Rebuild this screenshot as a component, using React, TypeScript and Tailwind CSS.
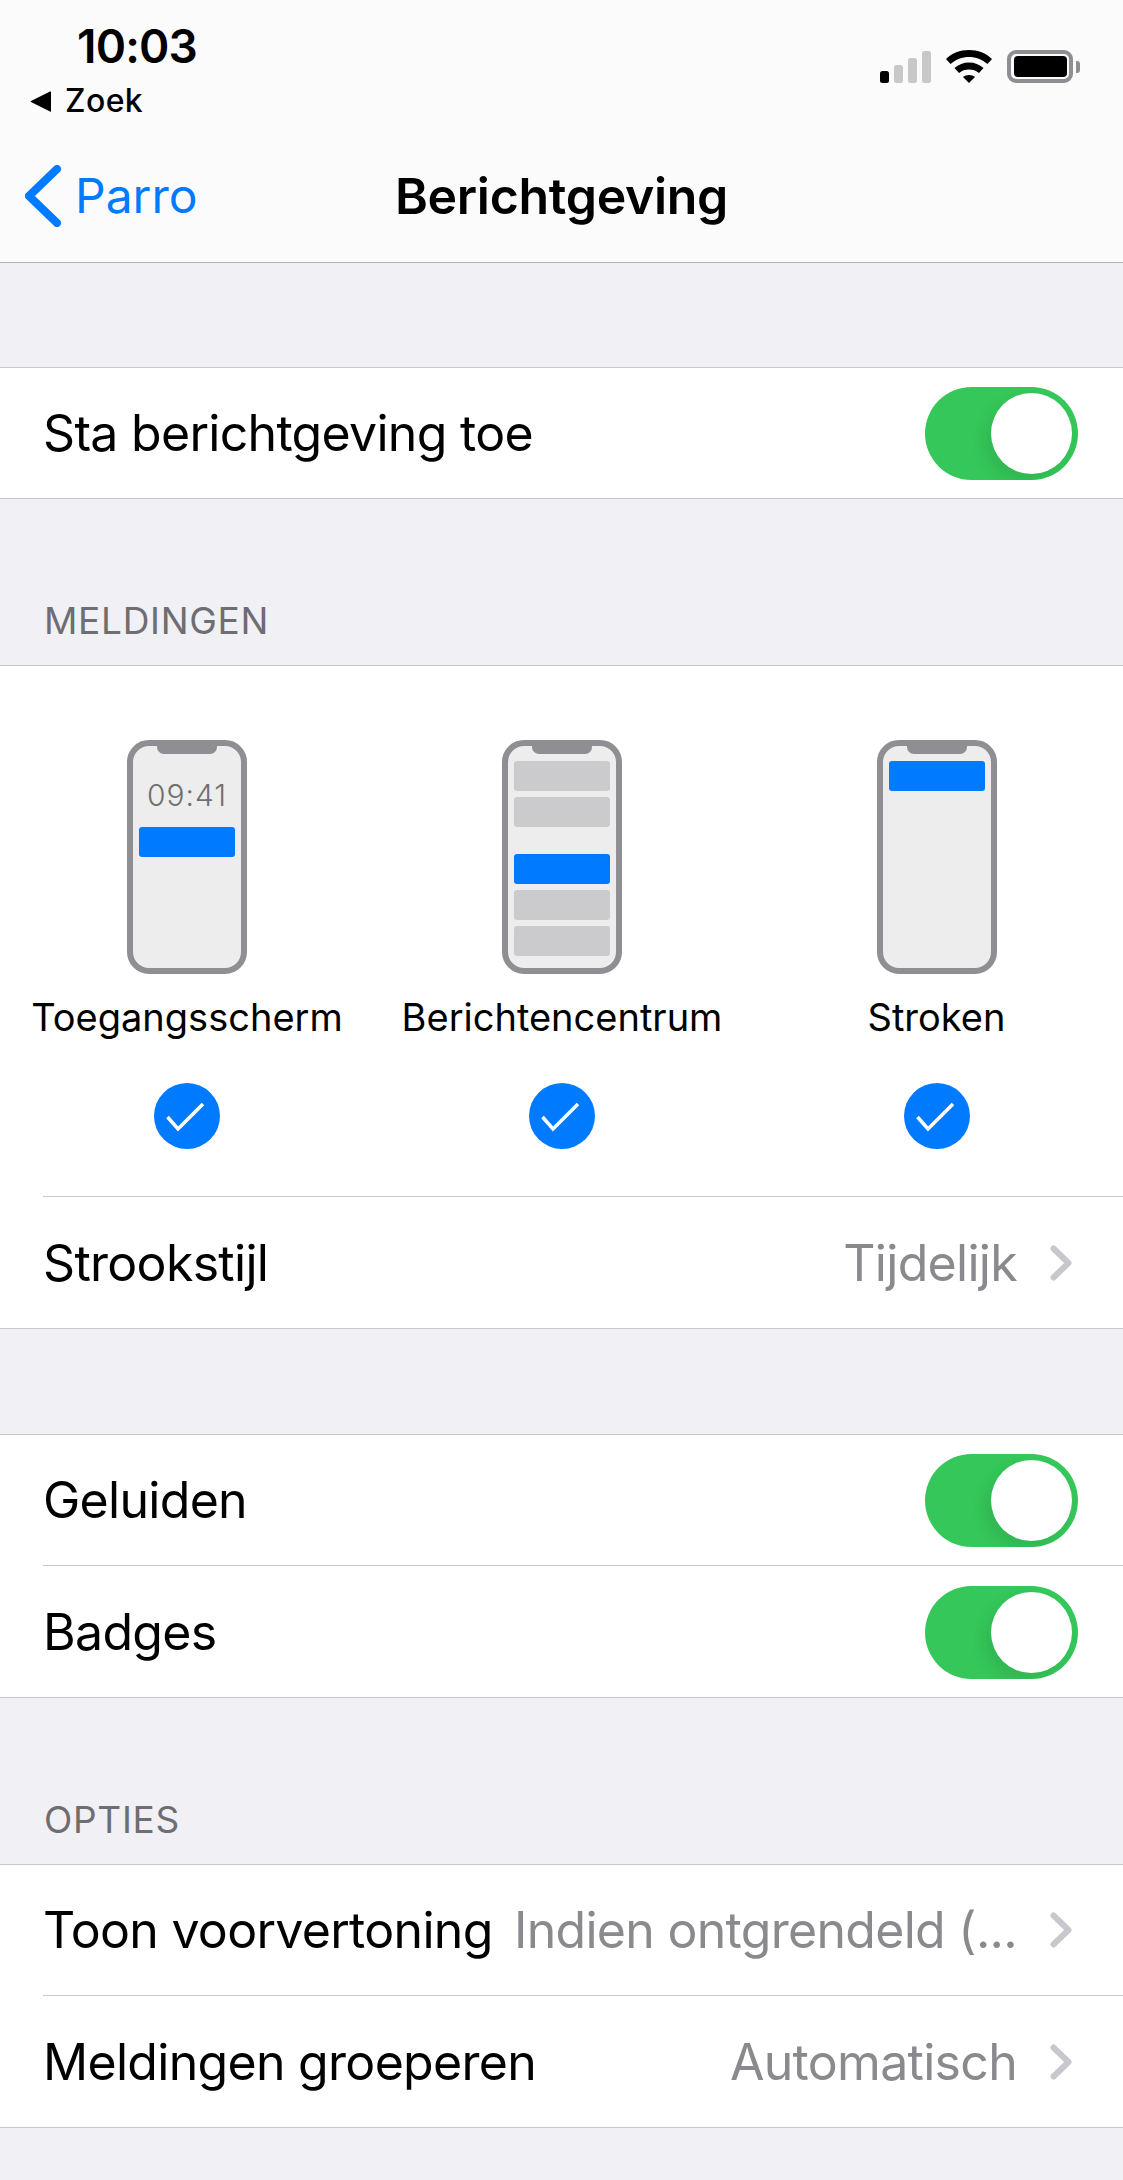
import React from 'react';

function Chevron() {
  return (
    <svg width="22" height="36" viewBox="0 0 22 36" className="shrink-0" fill="none">
      <path d="M3.5 3.5 L18.5 18 L3.5 32.5" stroke="#c7c7cc" strokeWidth="6" strokeLinecap="round" strokeLinejoin="round" />
    </svg>
  );
}

function Toggle() {
  return (
    <div className="flex h-[93px] w-[153px] shrink-0 items-center justify-end overflow-hidden rounded-full bg-[#35c759] pr-[6px]">
      <div className="h-[81px] w-[81px] rounded-full bg-white shadow-[-6px_8px_16px_rgba(0,0,0,0.09)]" />
    </div>
  );
}

function Row({ label, children }: { label: string; children?: React.ReactNode }) {
  return (
    <div className="flex h-[130px] items-center justify-between pl-[43px] pr-[45px]">
      <span className="shrink-0 text-[50px] leading-none tracking-[-0.7px] text-black">{label}</span>
      {children}
    </div>
  );
}

function ValueRow({ label, value }: { label: string; value: string }) {
  return (
    <Row label={label}>
      <div className="flex items-center gap-[33px] pr-[6px]">
        <span className="text-[50px] leading-none tracking-[-0.7px] text-[#8a8a8e]">{value}</span>
        <Chevron />
      </div>
    </Row>
  );
}

function Divider() {
  return <div className="ml-[43px] h-px bg-[#c8c7cc]" />;
}

function Phone({ children }: { children?: React.ReactNode }) {
  return (
    <div className="relative h-[234px] w-[120px] rounded-[22px] border-[6px] border-[#8e8e93] bg-[#ededed] px-[6px]">
      <div className="absolute left-[24px] top-0 h-[8px] w-[60px] rounded-b-[7px] bg-[#8e8e93]" />
      {children}
    </div>
  );
}

function Card({ blue }: { blue?: boolean }) {
  return <div className={blue ? 'h-[30px] rounded-[3px] bg-[#007aff]' : 'h-[30px] rounded-[3px] bg-[#cbcbcd]'} />;
}

function Check() {
  return (
    <svg width="66" height="66" viewBox="0 0 66 66" fill="none">
      <circle cx="33" cy="33" r="33" fill="#007aff" />
      <path d="M13.5 34 L24 46 L49 21" stroke="#fff" strokeWidth="3.5" />
    </svg>
  );
}

function AlertStyle({ label, children }: { label: string; children: React.ReactNode }) {
  return (
    <div className="flex flex-col items-center">
      <Phone>{children}</Phone>
      <span className="mt-[24px] whitespace-nowrap text-[38px] leading-[38px] text-black">{label}</span>
      <div className="mt-[47px]">
        <Check />
      </div>
    </div>
  );
}

function StatusIcons() {
  return (
    <div className="flex items-end pb-[1px]">
      <div className="flex items-end gap-[5px]">
        <div className="h-[12px] w-[9px] rounded-[2.5px] bg-black" />
        <div className="h-[18px] w-[9px] rounded-[2.5px] bg-[#c8c8c8]" />
        <div className="h-[25px] w-[9px] rounded-[2.5px] bg-[#c8c8c8]" />
        <div className="h-[32px] w-[9px] rounded-[2.5px] bg-[#c8c8c8]" />
      </div>
      <svg width="46" height="33" viewBox="0 0 46 33" className="ml-[15px]">
        <path d="M0 9 C6 3 14 0 23 0 C32 0 40 3 46 9 L41.5 14 C36 9.5 30 7 23 7 C16 7 10 9.5 4.5 14 Z" />
        <path d="M8.5 18 C12.5 14.5 17.5 12.5 23 12.5 C28.5 12.5 33.5 14.5 37.5 18 L33 23 C30 20.5 27 19.5 23 19.5 C19 19.5 16 20.5 13 23 Z" />
        <path d="M17 27 C18.5 25.8 20.5 25 23 25 C25.5 25 27.5 25.8 29 27 L23 33 Z" />
      </svg>
      <div className="ml-[15px] flex h-[33px] w-[66px] items-center justify-center rounded-[9px] border-[4px] border-[#8e8e93]">
        <div className="h-[21px] w-[53px] rounded-[4px] bg-black" />
      </div>
      <div className="mb-[10px] ml-[3px] h-[12px] w-[4px] rounded-r-[3px] bg-[#8e8e93]" />
    </div>
  );
}

export default function App() {
  return (
    <div className="min-h-[2180px] w-[1123px] bg-[#f0f0f5] font-['Inter','Liberation_Sans',sans-serif]">
      <header className="flex h-[263px] flex-col border-b border-[#b2b2b2] bg-[#fbfbfc]">
        <div className="flex h-[120px] justify-between pr-[43px]">
          <div>
            <div className="ml-[77px] mt-[24px] text-[46px] font-semibold leading-[44px] tracking-[-0.8px] text-black">10:03</div>
            <div className="mt-[15px] flex items-center">
              <svg width="22" height="21" viewBox="0 0 22 21" className="ml-[30px]">
                <path d="M21 1 L21 20 Q21 21 20 20.4 L1 11 Q0 10.5 1 10 L20 0.6 Q21 0 21 1 Z" />
              </svg>
              <span className="ml-[13px] text-[32px] font-medium leading-[36px] tracking-[0.4px] text-black">Zoek</span>
            </div>
          </div>
          <div className="mt-[50px]">
            <StatusIcons />
          </div>
        </div>
        <div className="relative flex h-[142px] items-start pt-[45px]">
          <svg width="36" height="62" viewBox="0 0 36 62" className="ml-[25px] shrink-0" fill="none">
            <path d="M32 4 L4 31 L32 58" stroke="#007aff" strokeWidth="8" strokeLinecap="round" strokeLinejoin="round" />
          </svg>
          <span className="ml-[14px] mt-[6px] text-[48px] leading-[50px] text-[#007aff]">Parro</span>
          <h1 className="absolute inset-x-0 top-[51px] text-center text-[50px] font-semibold leading-[50px] tracking-[-0.3px] text-black">Berichtgeving</h1>
        </div>
      </header>

      <div className="h-[104px]" />

      <section className="border-y border-[#c8c7cc] bg-white">
        <Row label="Sta berichtgeving toe">
          <Toggle />
        </Row>
      </section>

      <div className="flex h-[166px] items-end pb-[26px] pl-[44px] text-[37px] leading-none tracking-[0.7px] text-[#6d6d72]">MELDINGEN</div>

      <section className="border-y border-[#c8c7cc] bg-white">
        <div className="grid h-[530px] grid-cols-[374px_376px_373px] pt-[74px]">
          <AlertStyle label="Toegangsscherm">
            <div className="mt-[31px] text-center text-[30px] font-light leading-[36px] tracking-[1px] text-[#6f6f6f]">09:41</div>
            <div className="mt-[14px]">
              <Card blue />
            </div>
          </AlertStyle>
          <AlertStyle label="Berichtencentrum">
            <div className="flex flex-col gap-[6px] pt-[15px]">
              <Card />
              <Card />
              <div className="mt-[21px]">
                <Card blue />
              </div>
              <Card />
              <Card />
            </div>
          </AlertStyle>
          <AlertStyle label="Stroken">
            <div className="pt-[15px]">
              <Card blue />
            </div>
          </AlertStyle>
        </div>
        <Divider />
        <div className="pt-px">
          <ValueRow label="Strookstijl" value="Tijdelijk" />
        </div>
      </section>

      <div className="h-[105px]" />

      <section className="border-y border-[#c8c7cc] bg-white">
        <Row label="Geluiden">
          <Toggle />
        </Row>
        <Divider />
        <div className="pt-px">
          <Row label="Badges">
            <Toggle />
          </Row>
        </div>
      </section>

      <div className="flex h-[166px] items-end pb-[26px] pl-[44px] text-[37px] leading-none tracking-[0.7px] text-[#6d6d72]">OPTIES</div>

      <section className="border-y border-[#c8c7cc] bg-white">
        <ValueRow label="Toon voorvertoning" value="Indien ontgrendeld (..." />
        <Divider />
        <div className="pt-px">
          <ValueRow label="Meldingen groeperen" value="Automatisch" />
        </div>
      </section>
    </div>
  );
}
